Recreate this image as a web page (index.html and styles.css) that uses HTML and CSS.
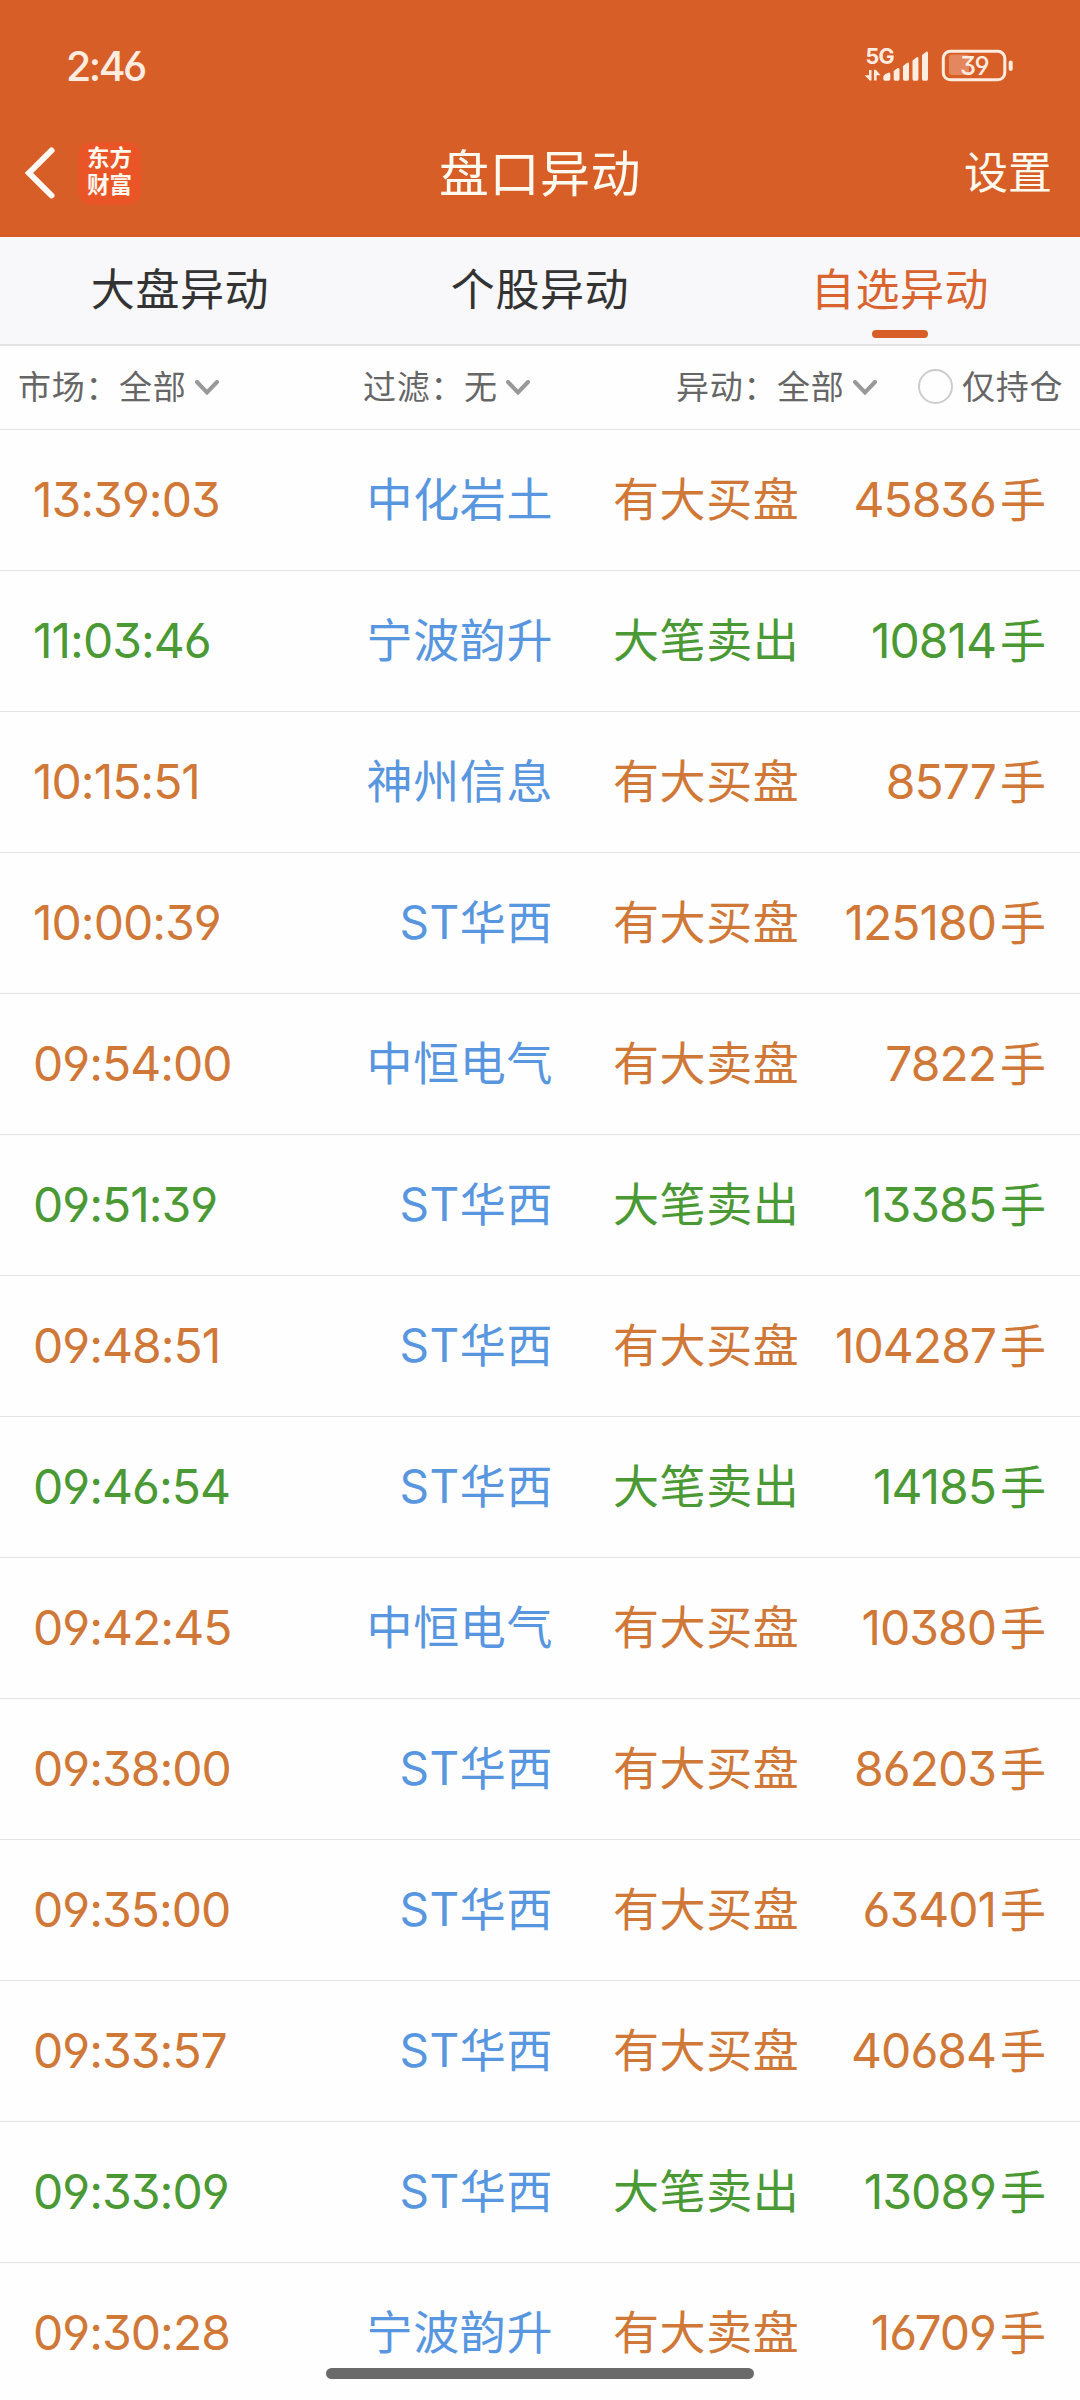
FILE: index.html
```html
<!DOCTYPE html>
<html lang="zh-CN">
<head>
  <meta charset="UTF-8">
  <title>盘口异动</title>
  <link rel="stylesheet" href="styles.css">
</head>
<body>
  <header class="header">
    <div class="status">
      <span class="clock">2:46</span>
      <svg class="status-icons" width="156" height="50" viewBox="860 35 156 50">
        <text class="net" x="865.5" y="63.5">5G</text>
        <path class="light" d="M869 70h2.5v10.5h-1.8l-5-5.3h4.3zM874 80.5V69.7h1.8l4.8 5.6h-4v5.2z"/>
        <path class="light" d="M883.3 79v-2.500q1-2.500 5-3.800q2-.5 2 1.500v4.800q0 1.700-1.700 1.700h-3.600q-1.700 0-1.700-1.700zM893.700 79v-8l4-3q1.800-.5 1.800 1.500V79q0 1.700-1.500 1.700h-2.800q-1.500 0-1.500-1.700zM903 79V66l4.300-3.300q1.700-.4 1.700 1.300v15q0 1.700-1.500 1.700h-3q-1.500 0-1.500-1.700zM912.500 79V60.500l4.200-3.300q1.700-.4 1.700 1.300V79q0 1.700-1.500 1.700h-2.900q-1.500 0-1.500-1.700zM922 79V55l4.300-3.300q1.700-.4 1.700 1.300v26q0 1.700-1.500 1.700h-3q-1.500 0-1.500-1.700z"/>
        <rect class="battery-fill" x="949" y="54.500" width="20" height="20.500" rx="3"/>
        <rect class="battery" x="943.300" y="51.300" width="61.500" height="28.500" rx="7"/>
        <rect class="light" x="1008.700" y="60.500" width="4" height="10.500" rx="2"/>
        <text class="percent" x="960" y="75">39</text>
      </svg>
    </div>
    <div class="navbar">
      <div class="nav-left">
        <svg class="back" width="32" height="54" viewBox="0 0 32 54">
          <path d="M27.500 4.500L5 27l22.500 22.500"/>
        </svg>
        <div class="logo">东方<br>财富</div>
      </div>
      <h1>盘口异动</h1>
      <a class="settings">设置</a>
    </div>
  </header>

  <nav class="tabs">
    <a class="tab">大盘异动</a>
    <a class="tab">个股异动</a>
    <a class="tab active">自选异动</a>
  </nav>

  <div class="filters">
    <div class="filter market"><span>市场：全部</span><svg class="arrow" viewBox="0 0 24 15"><path d="M2 2l10 10.500L22 2"/></svg></div>
    <div class="filter exclude"><span>过滤：无</span><svg class="arrow" viewBox="0 0 24 15"><path d="M2 2l10 10.500L22 2"/></svg></div>
    <div class="filter kind"><span>异动：全部</span><svg class="arrow" viewBox="0 0 24 15"><path d="M2 2l10 10.500L22 2"/></svg></div>
    <div class="filter"><i class="radio"></i><span>仅持仓</span></div>
  </div>

  <ul class="list">
    <li class="row up"><span class="time">13:39:03</span><span class="name">中化岩土</span><span class="type">有大买盘</span><span class="count">45836<i>手</i></span></li>
    <li class="row down"><span class="time">11:03:46</span><span class="name">宁波韵升</span><span class="type">大笔卖出</span><span class="count">10814<i>手</i></span></li>
    <li class="row up"><span class="time">10:15:51</span><span class="name">神州信息</span><span class="type">有大买盘</span><span class="count">8577<i>手</i></span></li>
    <li class="row up"><span class="time">10:00:39</span><span class="name">ST华西</span><span class="type">有大买盘</span><span class="count">125180<i>手</i></span></li>
    <li class="row up"><span class="time">09:54:00</span><span class="name">中恒电气</span><span class="type">有大卖盘</span><span class="count">7822<i>手</i></span></li>
    <li class="row down"><span class="time">09:51:39</span><span class="name">ST华西</span><span class="type">大笔卖出</span><span class="count">13385<i>手</i></span></li>
    <li class="row up"><span class="time">09:48:51</span><span class="name">ST华西</span><span class="type">有大买盘</span><span class="count">104287<i>手</i></span></li>
    <li class="row down"><span class="time">09:46:54</span><span class="name">ST华西</span><span class="type">大笔卖出</span><span class="count">14185<i>手</i></span></li>
    <li class="row up"><span class="time">09:42:45</span><span class="name">中恒电气</span><span class="type">有大买盘</span><span class="count">10380<i>手</i></span></li>
    <li class="row up"><span class="time">09:38:00</span><span class="name">ST华西</span><span class="type">有大买盘</span><span class="count">86203<i>手</i></span></li>
    <li class="row up"><span class="time">09:35:00</span><span class="name">ST华西</span><span class="type">有大买盘</span><span class="count">63401<i>手</i></span></li>
    <li class="row up"><span class="time">09:33:57</span><span class="name">ST华西</span><span class="type">有大买盘</span><span class="count">40684<i>手</i></span></li>
    <li class="row down"><span class="time">09:33:09</span><span class="name">ST华西</span><span class="type">大笔卖出</span><span class="count">13089<i>手</i></span></li>
    <li class="row up"><span class="time">09:30:28</span><span class="name">宁波韵升</span><span class="type">有大卖盘</span><span class="count">16709<i>手</i></span></li>
  </ul>

  <div class="home-bar"></div>
</body>
</html>
```
FILE: styles.css
```css
* {
  box-sizing: border-box;
}

body {
  margin: 0;
  height: 2400px;
  overflow: hidden;
  background-color: #fefefe;
  font-family: Inter, "Noto Sans CJK SC", sans-serif;
  font-feature-settings: "cv09", "cv03", "cv04";
}

.header {
  height: 237px;
  background-color: #d75f27;
  color: #fffaf0;
}

/* 状态栏 */
.status {
  display: flex;
  justify-content: space-between;
  height: 110px;
  padding: 35px 64px 0 66px;
  color: #ffece0;
}

.clock {
  font-size: 41px;
  font-weight: 500;
  line-height: 62px;
  letter-spacing: -2.5px;
}

.light {
  fill: #ffece0;
}

.net {
  fill: #ffece0;
  font-size: 21.5px;
  font-weight: 700;
  letter-spacing: -0.8px;
}

.percent {
  fill: #ffece0;
  font-size: 25.5px;
  font-weight: 500;
  letter-spacing: -1.5px;
}

.battery {
  fill: none;
  stroke: #ffece0;
  stroke-width: 3;
}

.battery-fill {
  fill: #e4875e;
}

/* 导航栏 */
.navbar {
  display: grid;
  grid-template-columns: 1fr auto 1fr;
  align-items: center;
  height: 126px;
  padding: 0 28px 0 24px;
}

.nav-left {
  display: flex;
  align-items: center;
  gap: 22px;
}

.back path {
  fill: none;
  stroke: #fffaf5;
  stroke-width: 6;
  stroke-linecap: round;
}

.logo {
  width: 63px;
  height: 63px;
  padding-top: 2px;
  border-radius: 14px;
  background-color: #ea5528;
  font-size: 22.5px;
  font-weight: 700;
  line-height: 27px;
  text-align: center;
}

h1 {
  margin: 2px 0 0 4px;
  font-size: 50px;
  font-weight: 400;
  line-height: 60px;
  letter-spacing: 0.5px;
}

.settings {
  justify-self: end;
  font-size: 44px;
  line-height: 60px;
}

/* 标签 */
.tabs {
  display: grid;
  grid-template-columns: repeat(3, 1fr);
  height: 109px;
  background-color: #f8f8fa;
  border-bottom: 2px solid #e3e3e3;
}

.tab {
  position: relative;
  color: #333;
  font-size: 44px;
  line-height: 107px;
  letter-spacing: 0.6px;
  text-align: center;
}

.active {
  color: #d9642f;
}

.active::after {
  content: "";
  position: absolute;
  left: 152px;
  bottom: 6px;
  width: 56px;
  height: 8px;
  border-radius: 4px;
  background-color: #d75f27;
}

/* 筛选 */
.filters {
  display: flex;
  height: 84px;
  padding-left: 18px;
  border-bottom: 1px solid #e3e3e3;
  color: #666;
  font-size: 33px;
  letter-spacing: 0.7px;
}

.filter {
  display: flex;
  align-items: center;
}

.filter span {
  padding-bottom: 5px;
}

.market {
  width: 345px;
}

.exclude {
  width: 313px;
}

.kind {
  width: 242px;
}

.arrow {
  width: 24px;
  height: 15px;
  margin-left: 8px;
  fill: none;
  stroke: #999;
  stroke-width: 4;
  stroke-linecap: round;
}

.radio {
  width: 35px;
  height: 35px;
  margin: 0 9px 2px 0;
  border: 2px solid #ccc;
  border-radius: 50%;
}

/* 列表 */
.list {
  margin: 0;
  padding: 0;
  list-style: none;
}

.row {
  display: grid;
  grid-template-columns: 252px 268px 183px 1fr;
  height: 141px;
  padding: 0 35px 0 33px;
  border-bottom: 1px solid #e3e3e3;
  font-size: 46px;
  line-height: 138px;
  letter-spacing: 0.6px;
}

.time,
.count {
  font-size: 48px;
  line-height: 140px;
  letter-spacing: -1px;
}

.name {
  color: #5896e0;
  text-align: right;
}

.type {
  margin-left: 60px;
  white-space: nowrap;
}

.count {
  text-align: right;
}

.count i {
  margin-left: 4px;
  font-size: 46px;
  font-style: normal;
}

.up {
  color: #d07837;
}

.down {
  color: #4b9934;
}

.home-bar {
  position: fixed;
  left: 326px;
  bottom: 21px;
  width: 428px;
  height: 11px;
  border-radius: 6px;
  background-color: #6a6a6a;
}
```
